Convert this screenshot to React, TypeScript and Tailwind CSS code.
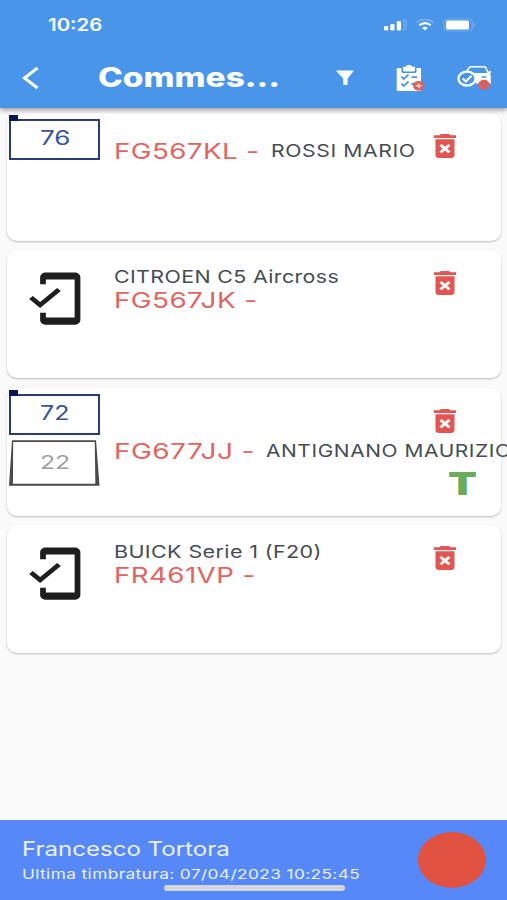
import { useLayoutEffect, useRef, useState } from "react";
import { MdDeleteForever, MdMobileFriendly } from "react-icons/md";

interface StretchProps {
  width: number;
  className: string;
  children: string;
}

interface Job {
  plate: string;
  plateWidth: number;
  model?: string;
  modelWidth?: number;
  customer?: string;
  customerWidth?: number;
  front?: string;
  rear?: string;
  tag?: string;
  offset: string;
}

// Wide lettering: the text is scaled sideways until it fills the given width
const Stretch = ({ width, className, children }: StretchProps) => {
  const ref = useRef<HTMLSpanElement>(null);
  const [scale, setScale] = useState(1);

  useLayoutEffect(() => {
    if (ref.current) setScale(width / ref.current.offsetWidth);
  }, [width, children]);

  return (
    <div className="shrink-0 whitespace-nowrap" style={{ width }}>
      <span ref={ref} className={`inline-block origin-left align-top ${className}`} style={{ transform: `scaleX(${scale})` }}>
        {children}
      </span>
    </div>
  );
};

const IconSignal = () => (
  <svg viewBox="0 0 24 12" fill="currentColor" className="w-6 h-3">
    <rect x="0" y="7" width="4.2" height="4.5" rx="1.2" />
    <rect x="6.3" y="5" width="4.2" height="6.5" rx="1.2" />
    <rect x="12.8" y="2" width="4.2" height="9.5" rx="1.2" />
    <rect x="19" y="0" width="4" height="11.5" rx="1.2" opacity="0.15" />
  </svg>
);

const IconWifi = () => (
  <svg viewBox="0 0 20 12" fill="none" stroke="currentColor" className="w-5 h-3">
    <path d="M1.5 3.6C6-.4 14-.4 18.5 3.6" strokeWidth="1.8" opacity="0.25" />
    <path d="M4.3 6.3C7.5 3.3 12.5 3.3 15.7 6.3" strokeWidth="2.2" />
    <path d="M7.2 8.9C8.8 7.5 11.2 7.5 12.8 8.9L10 11.6z" fill="currentColor" stroke="none" />
  </svg>
);

const IconBattery = () => (
  <svg viewBox="0 0 34 14" className="w-[34px] h-3.5">
    <rect x="1.2" y="1" width="28" height="12" rx="3" fill="none" stroke="currentColor" strokeWidth="1.2" opacity="0.22" />
    <rect x="3" y="2.5" width="23" height="9" rx="1.5" fill="currentColor" />
    <path d="M30.5 4.5q2.6 2.5 0 5z" fill="currentColor" opacity="0.3" />
  </svg>
);

const IconBack = () => (
  <svg viewBox="0 0 18 24" fill="none" stroke="currentColor" strokeWidth="3" className="w-[18px] h-6">
    <path d="M15.5 2L2.5 12L15.5 22" />
  </svg>
);

const IconFilter = () => (
  <svg viewBox="0 0 18 16" fill="currentColor" className="w-[18px] h-4">
    <path d="M1 .5h16q.8.2.3 1L11.6 8.5V14q0 1-1 1H8.2q-1 0-1-1V8.5L.7 1.5Q.2.7 1 .5z" />
  </svg>
);

const IconChecklist = () => (
  <svg viewBox="0 0 29 28" fill="none" className="w-[29px] h-7">
    <path d="M2 4H25V27H2Q.7 27 .7 25.7V5.2Q.7 4 2 4z" fill="white" />
    <path d="M5.5 3v4.5Q5.5 9 7 9h12q1.5 0 1.5-1.5V3" fill="#4895ea" />
    <path d="M7 2.7h2.5Q13-1.2 16.5 2.7h2.5V6q0 1.5-1.5 1.5h-9Q7 7.5 7 6z" fill="white" />
    <path d="M5.3 12.5l2.4 2.5 4.8-4.3M5.3 19.5l2.4 2.5 4.8-4.3M15.5 13.2h5.7M15.5 20h2.5" stroke="#4895ea" strokeWidth="1.8" />
    <ellipse cx="22.7" cy="21.8" rx="5.6" ry="4.9" fill="#e25f5c" />
    <path d="M19.9 21.8h5.6M22.7 19.4v4.8" stroke="#ffd2cd" strokeWidth="1.5" />
  </svg>
);

const IconCarCheck = () => (
  <svg viewBox="0 0 35 26" fill="none" className="w-[35px] h-[26px]">
    <path d="M9.5 7L12.2 2.6Q12.8 1.7 14 1.7H27Q28.2 1.7 28.8 2.7L31.3 8.5" stroke="white" strokeWidth="1.5" />
    <path d="M17 8h13.5l1.5-2h2v2.2h-1.2l1 2.5V18.5H19z" fill="white" />
    <ellipse cx="10" cy="13.6" rx="8.6" ry="7" fill="#4895ea" stroke="white" strokeWidth="2.4" />
    <path d="M5.7 13.5l3.2 3 5.6-5.7" stroke="white" strokeWidth="2.2" />
    <path d="M24.5 12h5" stroke="#4895ea" strokeWidth="1.5" />
    <ellipse cx="27" cy="19.7" rx="5.7" ry="4.9" fill="#e25f5c" />
    <ellipse cx="27" cy="19.7" rx="2.3" ry="1.8" fill="#b5708f" stroke="#d2575f" strokeWidth="1" />
  </svg>
);

const RearFrame = () => (
  <svg viewBox="0 0 92 46" fill="none" className="absolute inset-0 w-full h-full">
    <path d="M3 0H88L91.5 46H0z" fill="#4a4a4a" />
    <path d="M4.2 1.8H86.7L87.3 44H4z" fill="white" />
  </svg>
);

const jobs: Job[] = [
  { plate: "FG567KL -", plateWidth: 146, customer: "ROSSI MARIO", customerWidth: 144, front: "76", offset: "pt-[26px]" },
  { plate: "FG567JK -", plateWidth: 144, model: "CITROEN C5 Aircross", modelWidth: 225, offset: "pt-[15px]" },
  { plate: "FG677JJ -", plateWidth: 141, customer: "ANTIGNANO MAURIZIO", customerWidth: 246, front: "72", rear: "22", tag: "T", offset: "pt-[51px]" },
  { plate: "FR461VP -", plateWidth: 142, model: "BUICK Serie 1 (F20)", modelWidth: 208, offset: "pt-[15px]" },
];

const JobCard = ({ job }: { job: Job }) => (
  <li className="flex h-32 rounded-[10px] bg-white shadow-[0_1px_2px_rgba(0,0,0,0.25)]">
    <div className="w-[107px] shrink-0 pl-0.5 pt-1.5">
      {job.front ? (
        <div className="relative flex h-[41px] w-[91px] justify-center border-2 border-[#293c77] pt-[5px] text-[#3855a0]">
          <span className="absolute -left-0.5 -top-1.5 h-1.5 w-[9px] bg-[#06164f]" />
          <Stretch width={30} className="text-[20px] leading-6">{job.front}</Stretch>
        </div>
      ) : (
        <MdMobileFriendly preserveAspectRatio="none" className="ml-[11px] mt-[14px] h-[57px] w-[69px] text-[#1e1e1e]" />
      )}
      {job.rear && (
        <div className="relative mt-[5px] flex h-[46px] w-[91px] justify-center pt-[11px] text-[#a0a0a0]">
          <RearFrame />
          <div className="relative">
            <Stretch width={30} className="text-[19px] leading-6">{job.rear}</Stretch>
          </div>
        </div>
      )}
    </div>
    <div className={`min-w-0 flex-1 ${job.offset}`}>
      {job.model && (
        <Stretch width={job.modelWidth ?? 0} className="text-[17.5px] leading-6 tracking-[0.3px] text-[#454d53]">
          {job.model}
        </Stretch>
      )}
      <div className={job.model ? "-mt-px flex h-6" : "flex h-6 gap-[11px]"}>
        <Stretch width={job.plateWidth} className="text-[21.5px] leading-6 tracking-[0.3px] text-[#e3645f]">
          {job.plate}
        </Stretch>
        {job.customer && (
          <Stretch width={job.customerWidth ?? 0} className="text-[17.5px] leading-6 tracking-[0.5px] text-[#454d53]">
            {job.customer}
          </Stretch>
        )}
      </div>
    </div>
    <div className="w-[75px] shrink-0 pt-[17px]">
      <MdDeleteForever preserveAspectRatio="none" className="h-8 w-[38px] text-[#e25550]" />
      {job.tag && (
        <div className="ml-[22px] mt-[31px]">
          <Stretch width={29} className="text-[32px] leading-8 font-black text-[#68ad5b]">{job.tag}</Stretch>
        </div>
      )}
    </div>
  </li>
);

const Header = () => (
  <header className="relative h-[108px] bg-[#4895ea] text-white shadow-[0_2px_5px_rgba(0,0,0,0.4)]">
    <div className="flex h-[50px] items-center pl-12 pr-[30px]">
      <Stretch width={54} className="pt-0.5 text-[17px] leading-5 font-semibold">10:26</Stretch>
      <div className="ml-auto flex items-center">
        <IconSignal />
        <span className="w-[7px]" />
        <IconWifi />
        <span className="w-2" />
        <IconBattery />
      </div>
    </div>
    <div className="flex h-[55px] items-center pl-[22px] pr-[15px]">
      <IconBack />
      <h1 className="ml-[58px]">
        <Stretch width={182} className="text-[27px] leading-8 font-extrabold">Commes...</Stretch>
      </h1>
      <div className="ml-auto flex items-center">
        <IconFilter />
        <span className="w-[42px]" />
        <IconChecklist />
        <span className="w-8" />
        <IconCarCheck />
      </div>
    </div>
  </header>
);

const Footer = () => (
  <footer className="relative flex h-20 bg-[#5689f7] pl-[22px] pt-4 text-[#e9f1ff]">
    <div>
      <Stretch width={208} className="text-[20px] leading-[26px]">Francesco Tortora</Stretch>
      <Stretch width={338} className="text-[13.5px] leading-6 tracking-[0.3px]">Ultima timbratura: 07/04/2023 10:25:45</Stretch>
    </div>
    <button className="ml-auto mr-[21px] -mt-1 h-14 w-[68px] rounded-[50%] bg-[#e25241]" />
    <span className="absolute bottom-[9px] left-[164px] h-1.5 w-[181px] rounded-full bg-[#d5d6dc]" />
  </footer>
);

const App = () => (
  <div className="flex h-[900px] w-full flex-col overflow-hidden bg-[#fafafa] font-['Inter',sans-serif]">
    <Header />
    <ul className="flex flex-1 flex-col gap-[9.4px] pl-[7px] pr-1.5 pt-[5px]">
      {jobs.map((job) => (
        <JobCard key={job.plate} job={job} />
      ))}
    </ul>
    <Footer />
  </div>
);

export default App;
